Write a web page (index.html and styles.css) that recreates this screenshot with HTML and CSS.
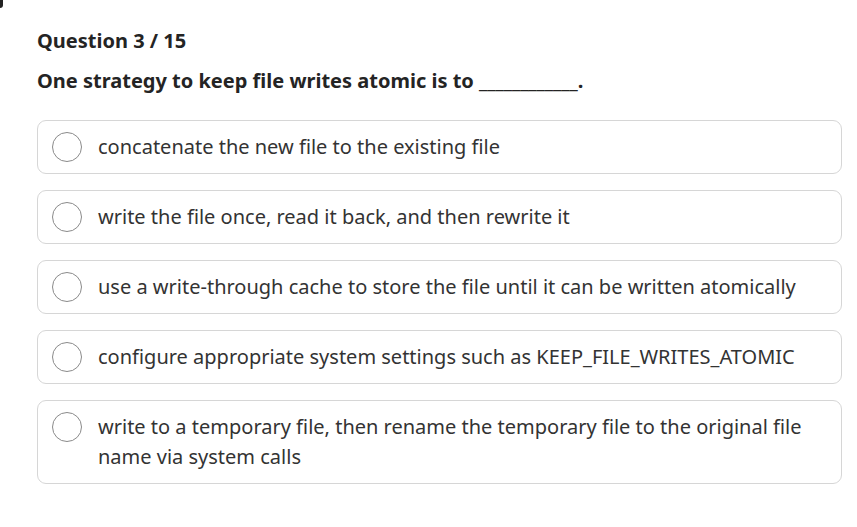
FILE: index.html
```html
<!DOCTYPE html>
<html lang="en">
<head>
<meta charset="utf-8">
<title>Question 3 / 15</title>
<link rel="stylesheet" href="styles.css">
</head>
<body>
<div class="corner-mark"></div>
<main class="quiz">
  <h2 class="counter">Question 3 / 15</h2>
  <p class="prompt">One strategy to keep file writes atomic is to ____________.</p>
  <ul class="options">
    <li class="option"><span class="radio"></span><span class="label">concatenate the new file to the existing file</span></li>
    <li class="option"><span class="radio"></span><span class="label">write the file once, read it back, and then rewrite it</span></li>
    <li class="option"><span class="radio"></span><span class="label">use a write-through cache to store the file until it can be written atomically</span></li>
    <li class="option"><span class="radio"></span><span class="label">configure appropriate system settings such as KEEP_FILE_WRITES_ATOMIC</span></li>
    <li class="option"><span class="radio"></span><span class="label">write to a temporary file, then rename the temporary file to the original file name via system calls</span></li>
  </ul>
</main>
</body>
</html>
```
FILE: styles.css
```css
html, body {
  margin: 0;
  padding: 0;
  background: #ffffff;
}

body {
  font-family: "Noto Sans", "Open Sans", sans-serif;
  color: #2b2b2b;
  position: relative;
}

.corner-mark {
  position: absolute;
  left: 0;
  top: 0;
  width: 3px;
  height: 8px;
  background: #222;
  border-bottom-right-radius: 3px;
}

.quiz {
  padding: 26px 15px 0 37px;
}

.counter {
  margin: 0;
  font-size: 20px;
  font-weight: 700;
  line-height: 30px;
  color: #242424;
}

.prompt {
  margin: 10px 0 0;
  font-size: 20px;
  font-weight: 700;
  line-height: 30px;
  color: #242424;
}

.options {
  list-style: none;
  margin: 24px 0 0;
  padding: 0;
  display: flex;
  flex-direction: column;
  gap: 16px;
}

.option {
  display: flex;
  align-items: flex-start;
  gap: 16px;
  border: 1px solid #d6d6d6;
  border-radius: 9px;
  padding: 11px 20px 11px 14px;
}

.radio {
  flex: none;
  box-sizing: border-box;
  width: 30px;
  height: 30px;
  border: 1.5px solid #8a8a8a;
  border-radius: 50%;
  background: #fff;
}

.label {
  font-size: 20px;
  line-height: 30px;
  color: #333333;
}
```
